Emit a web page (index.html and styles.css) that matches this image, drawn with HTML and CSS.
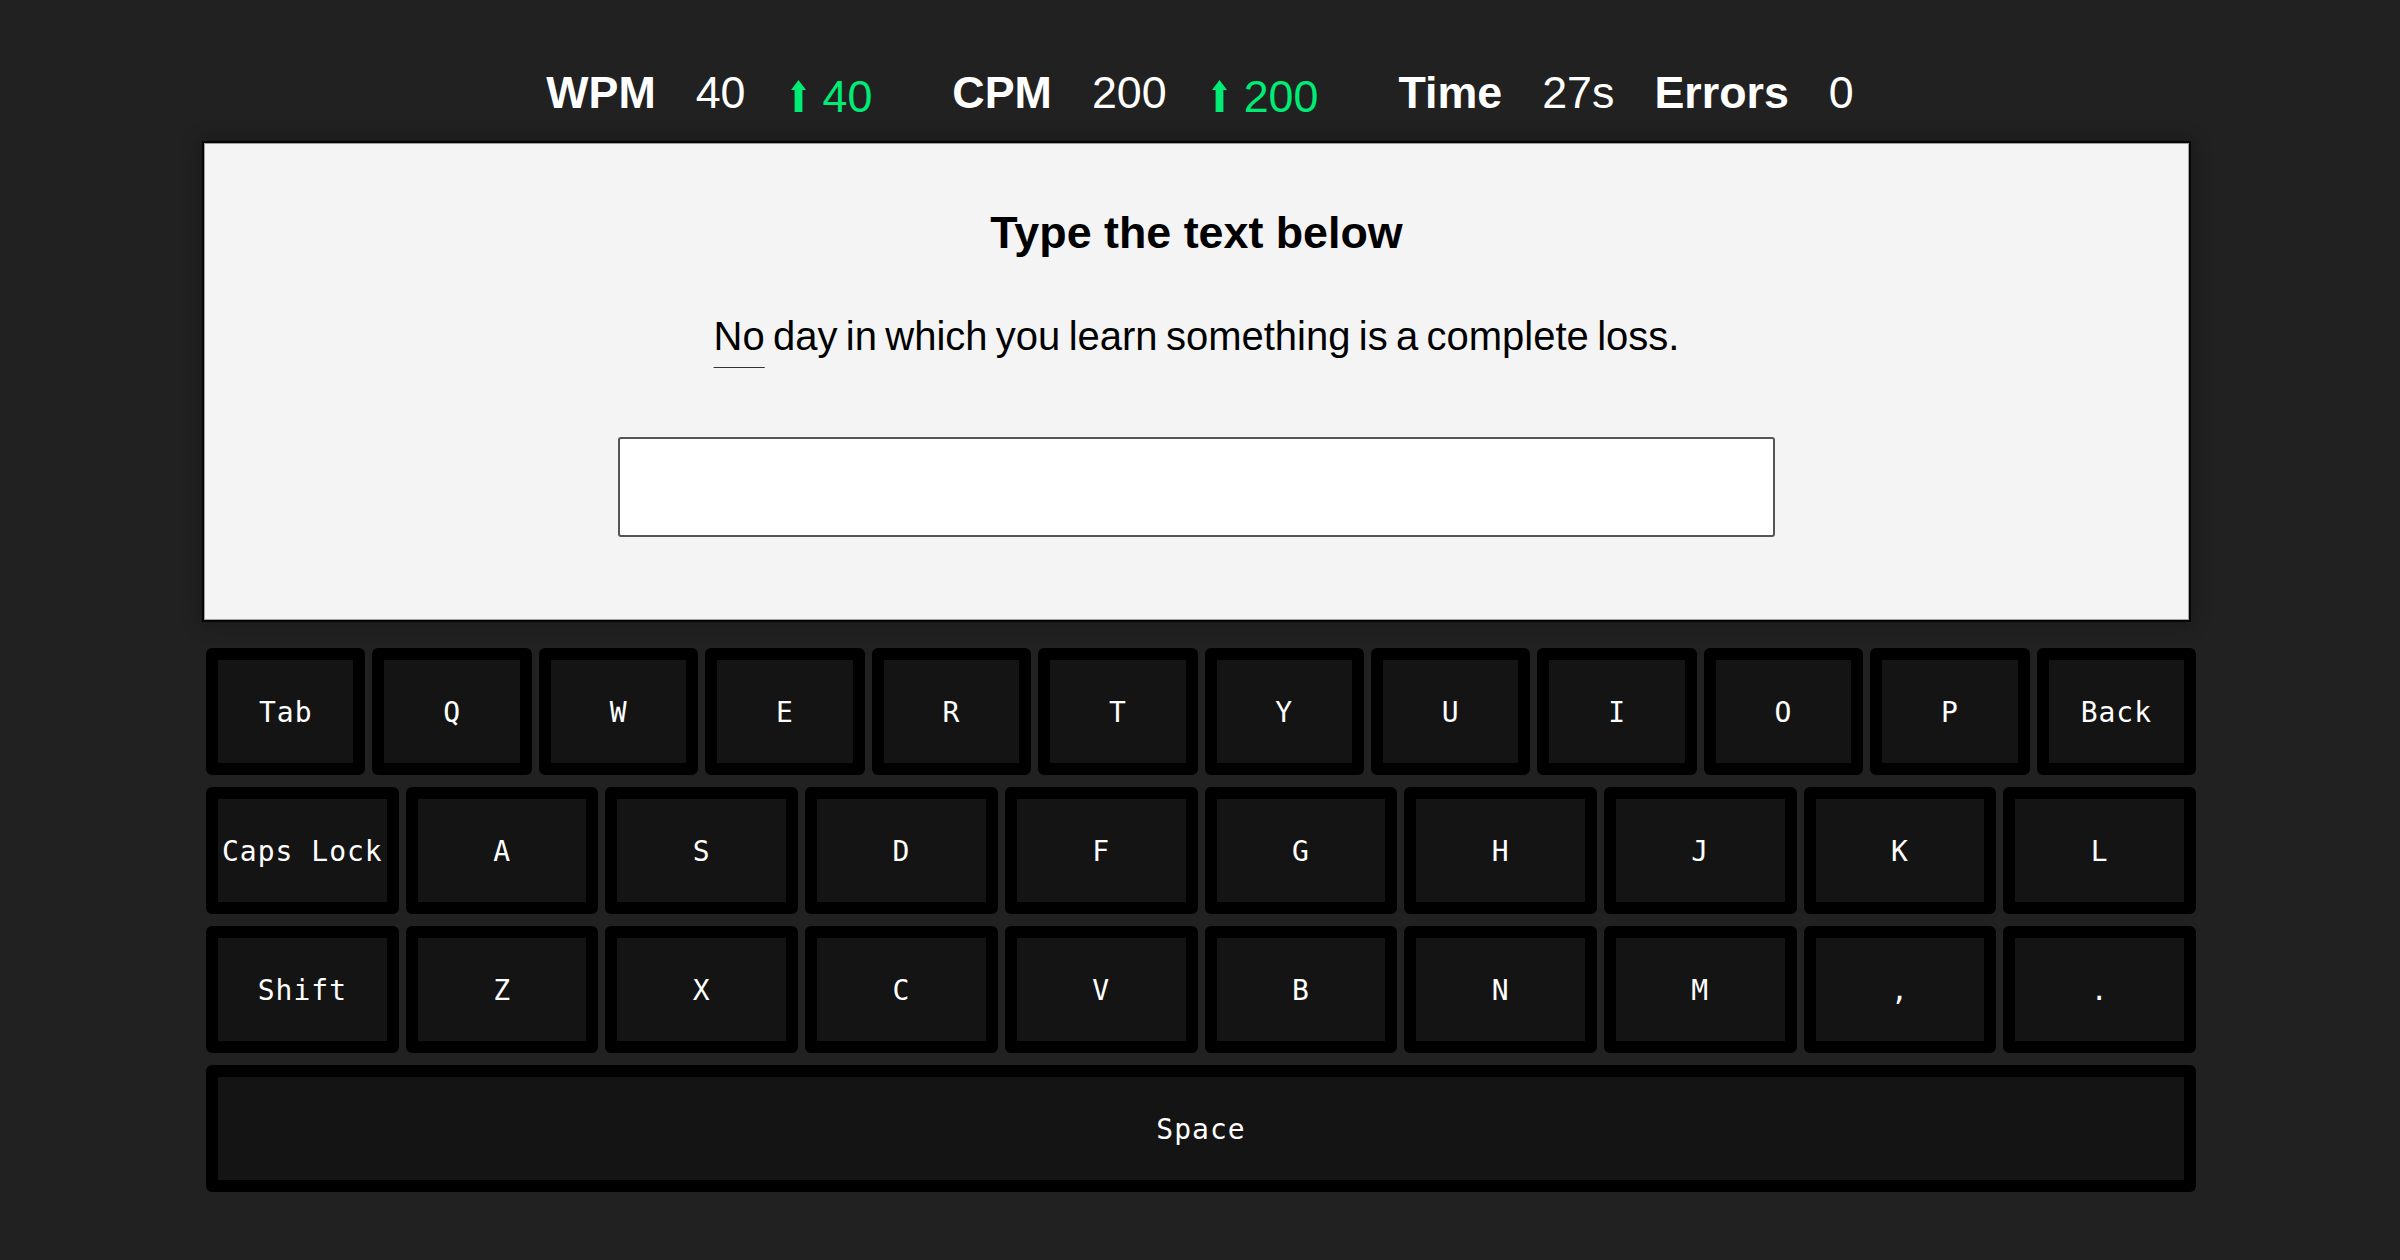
FILE: index.html
```html
<!DOCTYPE html>
<html lang="en">
<head>
<meta charset="utf-8">
<title>Typing Test</title>
<link rel="stylesheet" href="styles.css">
</head>
<body>
<header class="stats">
  <span class="label">WPM</span>
  <span class="val">40</span>
  <span class="delta"><svg class="arrow" viewBox="0 0 15 32" width="15" height="32"><polygon points="7.5,0 15,10 11.4,10 11.4,32 3.6,32 3.6,10 0,10" fill="#00ec74"/></svg><span>40</span></span>
  <span class="label">CPM</span>
  <span class="val">200</span>
  <span class="delta"><svg class="arrow" viewBox="0 0 15 32" width="15" height="32"><polygon points="7.5,0 15,10 11.4,10 11.4,32 3.6,32 3.6,10 0,10" fill="#00ec74"/></svg><span>200</span></span>
  <span class="label">Time</span>
  <span class="val">27s</span>
  <span class="label">Errors</span>
  <span class="val">0</span>
</header>
<main class="app">
  <section class="card">
    <h1 class="title">Type the text below</h1>
    <p class="quote"><span class="current">No</span> day in which you learn something is a complete loss.</p>
    <input class="entry" type="text" aria-label="Type here">
  </section>
  <div class="keyboard">
    <div class="row">
      <div class="key">Tab</div><div class="key">Q</div><div class="key">W</div><div class="key">E</div><div class="key">R</div><div class="key">T</div><div class="key">Y</div><div class="key">U</div><div class="key">I</div><div class="key">O</div><div class="key">P</div><div class="key">Back</div>
    </div>
    <div class="row">
      <div class="key">Caps Lock</div><div class="key">A</div><div class="key">S</div><div class="key">D</div><div class="key">F</div><div class="key">G</div><div class="key">H</div><div class="key">J</div><div class="key">K</div><div class="key">L</div>
    </div>
    <div class="row">
      <div class="key">Shift</div><div class="key">Z</div><div class="key">X</div><div class="key">C</div><div class="key">V</div><div class="key">B</div><div class="key">N</div><div class="key">M</div><div class="key">,</div><div class="key">.</div>
    </div>
    <div class="row">
      <div class="key">Space</div>
    </div>
  </div>
</main>
</body>
</html>
```

FILE: styles.css
```css
html, body {
  margin: 0;
  padding: 0;
}
body {
  background: #222122;
  min-height: 1260px;
  font-family: "Liberation Sans", Arial, sans-serif;
}

.stats {
  height: 141px;
  box-sizing: border-box;
  padding-top: 70px;
  display: flex;
  justify-content: center;
  align-items: flex-start;
  gap: 40px;
  color: #fff;
  font-size: 44.8px;
  line-height: 1;
}
.label {
  font-weight: 700;
}
.val {
  font-weight: 400;
}
.delta {
  display: flex;
  align-items: flex-start;
  gap: 17px;
  padding-top: 4px;
  margin-left: 5px;
  margin-right: 40px;
  color: #00ec74;
}
.arrow {
  display: block;
  margin-top: 6px;
}

.app {
  width: 1994px;
  margin-left: 202px;
}

.card {
  width: 1989px;
  box-sizing: border-box;
  background: #f4f4f4;
  border: 2px solid #050505;
  box-shadow: inset 0 0 0 1px #a0a0a0, 0 0 18px rgba(0, 0, 0, 0.35);
  padding: 67px 0 83px;
}
.title {
  margin: 0;
  text-align: center;
  font-size: 44.8px;
  line-height: 1;
  font-weight: 700;
  color: #000;
}
.quote {
  margin: 61px 0 0;
  text-align: center;
  font-size: 40px;
  line-height: 1;
  word-spacing: -2.8px;
  color: #000;
}
.current {
  text-decoration: underline;
  text-decoration-thickness: 1px;
  text-underline-offset: 17px;
  text-decoration-color: #333;
}
.entry {
  display: block;
  width: 1157px;
  height: 100px;
  box-sizing: border-box;
  margin: 81px auto 0;
  border: 2px solid #555;
  border-radius: 3px;
  background: #fff;
  outline: none;
  padding: 0 12px;
  font-size: 32px;
  font-family: "Liberation Sans", Arial, sans-serif;
}

.keyboard {
  width: 1990px;
  margin: 26px 0 0 4px;
  display: flex;
  flex-direction: column;
  gap: 12px;
}
.row {
  display: flex;
  gap: 7px;
  height: 127px;
}
.key {
  flex: 1 1 0;
  min-width: 0;
  box-sizing: border-box;
  border: 12px solid #000;
  border-radius: 6px;
  background: #141414;
  color: #fff;
  display: flex;
  align-items: center;
  justify-content: center;
  padding-top: 2px;
  font-family: "DejaVu Sans Mono", "Liberation Mono", monospace;
  font-size: 28px;
  letter-spacing: 1px;
  white-space: nowrap;
}
```
